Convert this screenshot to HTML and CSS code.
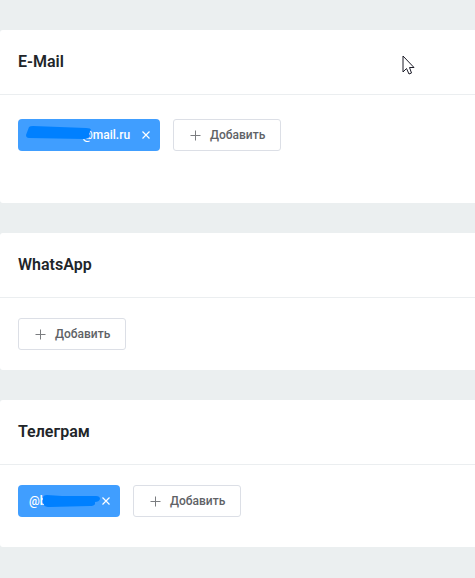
FILE: index.html
```html
<!DOCTYPE html>
<html lang="ru">
<head>
<meta charset="utf-8">
<title>E-Mail, WhatsApp, Телеграм</title>
<link rel="stylesheet" href="styles.css">
</head>
<body>
<main class="page">
  <section class="card">
    <h2 class="card-title">E-Mail</h2>
    <div class="card-body card-body-email">
      <span class="tag tag-email">
        <span class="tag-text">@mail.ru</span>
        <button class="tag-close" type="button" aria-label="Удалить"><svg width="8" height="8" viewBox="0 0 8 8"><path d="M.5.5l7 7M7.5.5l-7 7"/></svg></button>
        <svg class="mark mark-email" width="68" height="16" viewBox="0 0 68 16"><path d="M4 2Q5 1 8 1L61 3Q66 3 66 5L64 8L65 11Q64 14 59 14L4 13Q1 13 1 10Z"/></svg>
      </span>
      <button class="add" type="button"><svg width="11" height="11" viewBox="0 0 11 11"><path d="M5.5 0.500v10M0.500 5.500h10"/></svg>Добавить</button>
    </div>
  </section>
  <section class="card">
    <h2 class="card-title">WhatsApp</h2>
    <div class="card-body">
      <button class="add" type="button"><svg width="11" height="11" viewBox="0 0 11 11"><path d="M5.5 0.500v10M0.500 5.500h10"/></svg>Добавить</button>
    </div>
  </section>
  <section class="card">
    <h2 class="card-title">Телеграм</h2>
    <div class="card-body card-body-telegram">
      <span class="tag tag-telegram">
        <span class="tag-text">@b</span>
        <button class="tag-close" type="button" aria-label="Удалить"><svg width="8" height="8" viewBox="0 0 8 8"><path d="M.5.5l7 7M7.5.5l-7 7"/></svg></button>
        <svg class="mark mark-telegram" width="60" height="14" viewBox="0 0 60 14"><path d="M1 4Q1 1 5 1L20 2H54Q58 2 58 5Q57 8 53 8V10Q52 12 48 12L8 13Q3 13 2 11Q0 8 1 4Z"/></svg>
      </span>
      <button class="add" type="button"><svg width="11" height="11" viewBox="0 0 11 11"><path d="M5.5 0.500v10M0.500 5.500h10"/></svg>Добавить</button>
    </div>
  </section>
</main>
<svg class="cursor" width="13" height="21" viewBox="0 0 13 21"><path d="M1 1V17L4.500 13.500L7 19L9.500 18L7.500 12.500H12Z"/></svg>
</body>
</html>
```
FILE: styles.css
```css
* {
  box-sizing: border-box;
}

body {
  margin: 0;
  background: #ebeff0;
  font-family: Roboto, "Liberation Sans", sans-serif;
  color: #212529;
}

.page {
  display: flex;
  flex-direction: column;
  gap: 30px;
  padding: 30px 0;
}

.card {
  background: #fff;
  border-radius: 3px 0 0 3px;
}

.card-title {
  margin: 0;
  padding: 20px 18px;
  border-bottom: 1px solid #ebeef0;
  font-size: 16px;
  font-weight: 600;
  line-height: 24px;
}

.card-body {
  display: flex;
  gap: 13px;
  padding: 20px 18px;
}

.card-body-email {
  padding-top: 24px;
  padding-bottom: 52px;
}

.card-body-telegram {
  padding-bottom: 30px;
}

.tag {
  position: relative;
  display: flex;
  align-items: center;
  justify-content: space-between;
  height: 32px;
  padding: 0 10px 0 11px;
  border-radius: 4px;
  background: #409eff;
  color: #fff;
  font-size: 12px;
  font-weight: 500;
}

.tag-email {
  width: 142px;
  padding-left: 64px;
}

.tag-telegram {
  width: 102px;
}

.tag-close {
  display: flex;
  padding: 0;
  border: 0;
  background: none;
}

.tag-close svg {
  fill: none;
  stroke: #fff;
  stroke-width: 1.2;
}

.mark {
  position: absolute;
  fill: #0080ff;
}

.mark-email {
  left: 7px;
  top: 6px;
}

.mark-telegram {
  left: 24px;
  top: 9px;
}

.add {
  display: flex;
  align-items: center;
  gap: 9px;
  height: 32px;
  padding: 0 15px 0 16px;
  border: 1px solid #dcdfe6;
  border-radius: 3px;
  background: #fff;
  color: #606266;
  font-family: inherit;
  font-size: 12px;
  font-weight: 500;
}

.add svg {
  fill: none;
  stroke: #7b7d80;
}

.cursor {
  position: absolute;
  left: 402px;
  top: 55px;
  fill: #fff;
  stroke: #1c1c28;
}
```
